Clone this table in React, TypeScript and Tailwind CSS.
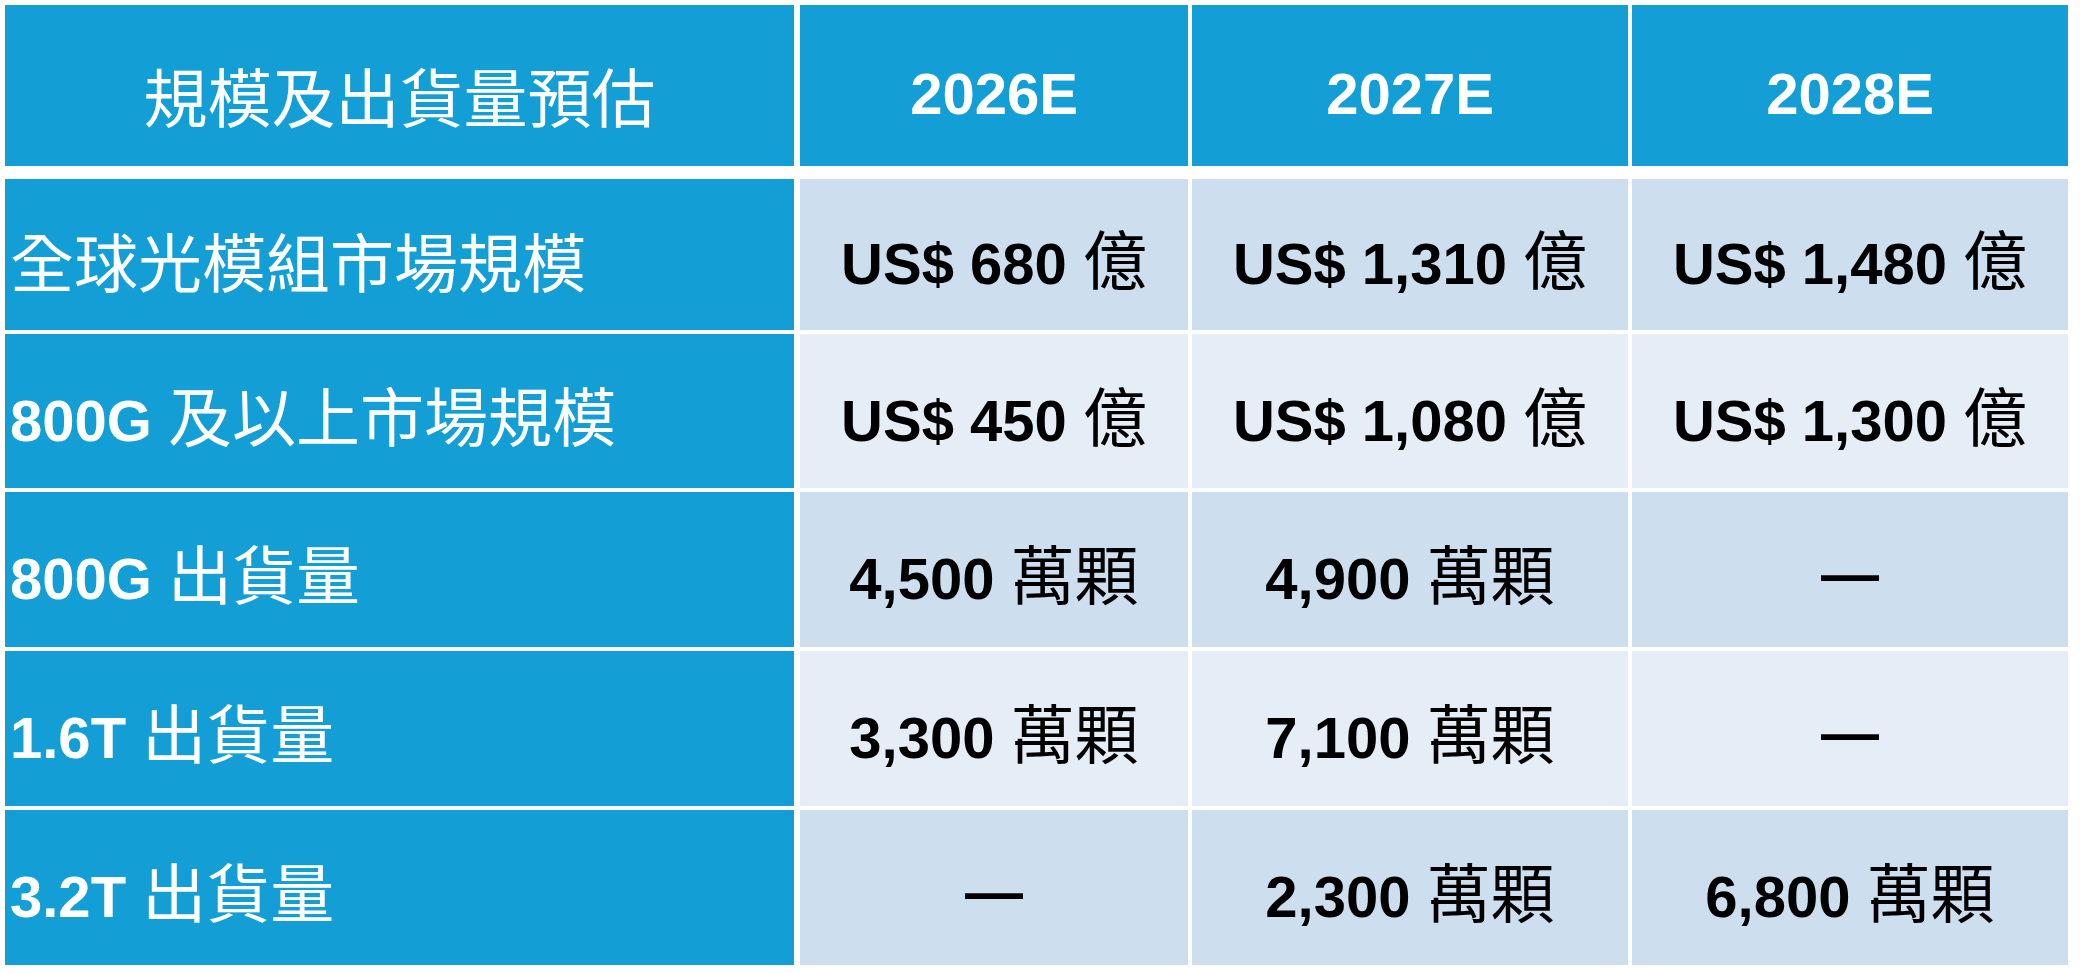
import React from "react";

type Row = {
  label: string;
  tone: "dark" | "light";
  height: string;
  values: string[];
};

const YEARS = ["2026E", "2027E", "2028E"];

const ROWS: Row[] = [
  {
    label: "全球光模組市場規模",
    tone: "dark",
    height: "h-[151px]",
    values: ["US$ 680 億", "US$ 1,310 億", "US$ 1,480 億"],
  },
  {
    label: "800G 及以上市場規模",
    tone: "light",
    height: "h-[154px]",
    values: ["US$ 450 億", "US$ 1,080 億", "US$ 1,300 億"],
  },
  {
    label: "800G 出貨量",
    tone: "dark",
    height: "h-[155px]",
    values: ["4,500 萬顆", "4,900 萬顆", "—"],
  },
  {
    label: "1.6T 出貨量",
    tone: "light",
    height: "h-[155px]",
    values: ["3,300 萬顆", "7,100 萬顆", "—"],
  },
  {
    label: "3.2T 出貨量",
    tone: "dark",
    height: "h-[155px]",
    values: ["—", "2,300 萬顆", "6,800 萬顆"],
  },
];

const COL_WIDTHS = ["w-[388px]", "w-[436px]", "w-[436px]"];

// Latin runs are bold, Han runs stay regular and a touch larger
function Mixed({ text }: { text: string }) {
  const parts = text.split(/([\u3400-\u9fff]+)/).filter(Boolean);
  return (
    <span className="whitespace-pre leading-none">
      {parts.map((p, i) =>
        /[\u3400-\u9fff]/.test(p) ? (
          <span key={i} className="font-['Noto_Sans_CJK_TC',sans-serif] text-[64px] font-normal">
            {p}
          </span>
        ) : (
          <span key={i} className="font-['Liberation_Sans',Arial,sans-serif] text-[58px] font-bold">
            {p}
          </span>
        )
      )}
    </span>
  );
}

export default function App() {
  return (
    <div className="min-h-screen w-[2080px] bg-white pl-[5px] pt-[5px]">
      <div className="flex flex-col gap-[4px]">
        <div className="mb-[9px] flex h-[161px] gap-[4px] text-white">
          <div className="mr-[2px] flex w-[789px] items-center justify-center bg-[#139fd6] pt-[16px]">
            <Mixed text="規模及出貨量預估" />
          </div>
          {YEARS.map((y, i) => (
            <div
              key={y}
              className={`flex ${COL_WIDTHS[i]} items-center justify-center bg-[#139fd6] pt-[16px]`}
            >
              <Mixed text={y} />
            </div>
          ))}
        </div>

        {ROWS.map((row) => (
          <div key={row.label} className={`flex ${row.height} gap-[4px]`}>
            <div className="mr-[2px] flex w-[789px] items-center bg-[#139fd6] pl-[5px] pt-[8px] text-white">
              <Mixed text={row.label} />
            </div>
            {row.values.map((v, i) => (
              <div
                key={i}
                className={`flex ${COL_WIDTHS[i]} items-center justify-center pt-[8px] text-black ${
                  row.tone === "dark" ? "bg-[#cddeee]" : "bg-[#e5eef7]"
                }`}
              >
                <Mixed text={v} />
              </div>
            ))}
          </div>
        ))}
      </div>
    </div>
  );
}
